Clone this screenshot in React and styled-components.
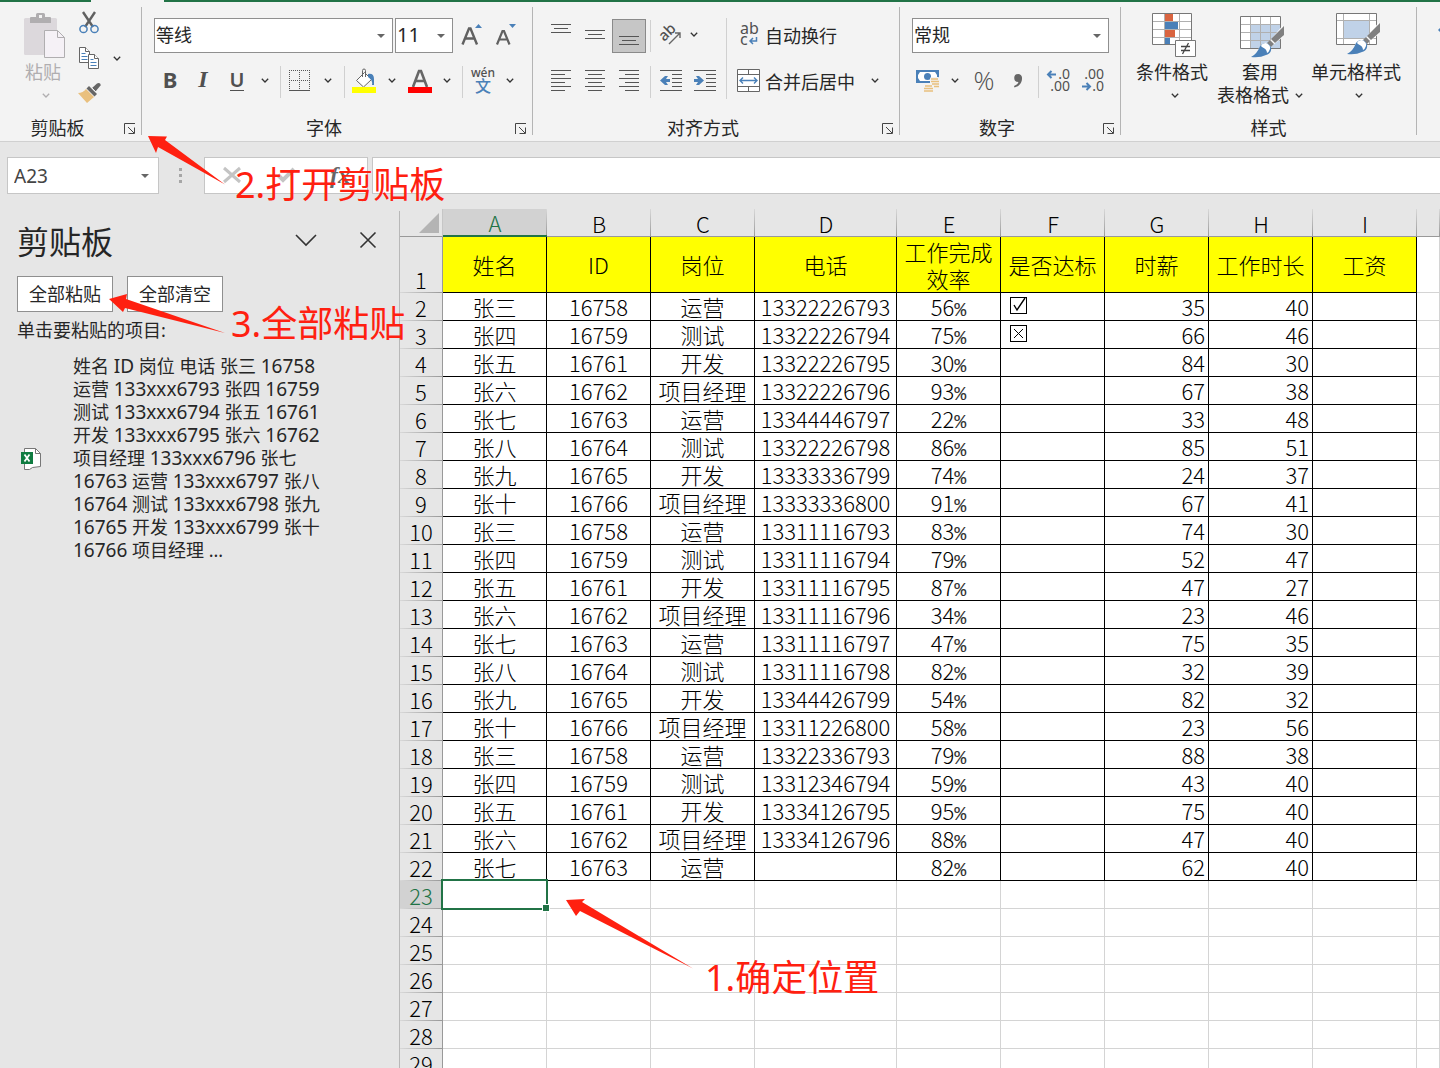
import React from 'react';
import styled, { createGlobalStyle, css } from 'styled-components';

const GlobalStyle = createGlobalStyle`
    *, *::before, *::after {
        box-sizing: border-box;
    }

    body {
        margin: 0;
        background: #e6e6e6;
        color: #262626;
        font-family: 'Noto Sans', 'Noto Sans CJK SC', sans-serif;
        font-size: 18px;
    }

    button, select, input {
        font: inherit;
        color: inherit;
        margin: 0;
    }

    svg {
        display: block;
        flex: none;
        overflow: visible;
    }
`;

const PAGE = styled.div`
    position: relative;
    display: flex;
    flex-direction: column;
    height: 100vh;
    overflow: hidden;
`;

/* ---------- ribbon ---------- */

const TABSTRIP = styled.div`
    display: flex;
    justify-content: space-between;
    height: 2px;
    background: #217346;
`;

const ACTIVETAB = styled.div`
    width: 73px;
    margin-left: 91px;
    background: #f3f3f3;
`;

const RIBBON = styled.header`
    display: flex;
    flex: none;
    min-height: 140px;
    background: #f3f3f3;
    border-bottom: 1px solid #d0d0d0;
    overflow: hidden;
`;

const DIVIDER = styled.div`
    flex: none;
    width: 1px;
    margin: 5px 0 6px;
    background: #b4b4b4;
`;

const GROUP = styled.section`
    display: flex;
    flex-direction: column;
    flex: none;
    width: ${props => props.$width}px;
    padding-top: ${props => props.$top || 16}px;
    padding-bottom: 1px;
`;

const GROUPBODY = styled.div`
    display: flex;
    padding-left: ${props => props.$left || 12}px;
`;

const GROUPFOOTER = styled.div`
    display: flex;
    align-items: center;
    height: 24px;
    margin-top: auto;
    line-height: 24px;
`;

const GROUPNAME = styled.span`
    flex: 1;
    text-align: center;
`;

const LAUNCHER = styled.button`
    display: flex;
    width: 26px;
    padding: 2px 0 0 9px;
    border: none;
    background: none;
`;

const TOOLROWS = styled.div`
    display: flex;
    flex-direction: column;
    gap: 11px;
`;

const TOOLROW = styled.div`
    display: flex;
    align-items: center;
    height: 35px;
`;

const TOOL = styled.button`
    display: flex;
    align-items: center;
    justify-content: center;
    flex: none;
    width: ${props => props.$width || 34}px;
    height: 34px;
    padding: 0 0 2px;
    border: 1px solid transparent;
    background: none;
    color: #505050;
    white-space: nowrap;

    ${props => props.$active && css`
        background: #c6c6c6;
        border-color: #8a8a8a;
    `}
`;

const TEXTTOOL = styled(TOOL)`
    justify-content: flex-start;
    gap: 5px;
    width: auto;
    padding-left: 6px;
    color: #262626;
`;

const LETTER = styled.span`
    padding-bottom: 4px;
    font-size: ${props => props.$size || 22}px;
    font-weight: ${props => props.$weight || 700};
    line-height: 26px;
`;

const ITALIC = styled(LETTER)`
    font-family: 'Liberation Serif', serif;
    font-style: italic;
`;

const UNDERLINED = styled(LETTER)`
    padding: 0;
    line-height: 20px;
    border-bottom: 1px solid #505050;
`;

const PERCENTSIGN = styled(LETTER)`
    padding-bottom: 2px;
    font-family: 'Open Sans', sans-serif;
`;

const SEPARATOR = styled.span`
    flex: none;
    align-self: ${props => (props.$tall ? 'stretch' : 'center')};
    width: 1px;
    height: ${props => (props.$tall ? 'auto' : '32px')};
    margin: 0 3px 0 4px;
    background: #d0d0d0;
`;

const COMBO = styled.label`
    display: flex;
    align-items: center;
    width: ${props => props.$width}px;
    height: 35px;
    margin-right: 2px;
    padding-right: 7px;
    border: 1px solid #8f8f8f;
    background: #fff;
    font-size: ${props => props.$size || 18}px;
`;

const COMBOSELECT = styled.select`
    flex: 1;
    min-width: 0;
    height: 100%;
    padding: 0 0 2px 1px;
    border: none;
    background: none;
    appearance: none;
    outline: none;
`;

const SMALLTOOLS = styled.div`
    display: flex;
    flex-direction: column;
    gap: 1px;
`;

const SMALLROW = styled.div`
    display: flex;
`;

const BIGTOOL = styled.button`
    display: flex;
    flex-direction: column;
    align-items: center;
    flex: none;
    width: ${props => props.$width}px;
    padding: 0;
    border: none;
    background: none;
    line-height: 23px;
    white-space: nowrap;
    color: ${props => (props.disabled ? '#b0aeb0' : '#262626')};
`;

const PASTETOOL = styled(BIGTOOL)`
    margin-top: 6px;
    margin-right: 4px;
`;

const BIGICON = styled.span`
    display: flex;
    height: 48px;
    padding-left: 4px;
`;

const BIGLINE = styled.span`
    display: flex;
    align-items: center;
    gap: 6px;
    height: 23px;
`;

const DROPLINE = styled(BIGLINE)`
    padding-left: 5px;
`;

const RIBBONEND = styled.div`
    display: flex;
    flex: 1;
    justify-content: flex-end;
    padding-top: 24px;
`;

/* ---------- formula bar ---------- */

const FORMULABAR = styled.div`
    display: flex;
    align-items: center;
    flex: none;
    height: 67px;
    padding: 0 0 0 7px;
`;

const NAMEBOX = styled.div`
    display: flex;
    align-items: center;
    width: 152px;
    height: 37px;
    padding-right: 9px;
    border: 1px solid #c6c6c6;
    background: #fff;
`;

const NAMEINPUT = styled.input`
    flex: 1;
    min-width: 0;
    padding: 1px 0 0 6px;
    border: none;
    outline: none;
    background: none;
    color: #444;
    font-size: 19px;
`;

const GRIP = styled.div`
    display: flex;
    flex-direction: column;
    gap: 3px;
    margin: 0 22px 0 20px;
`;

const GRIPDOT = styled.i`
    width: 3px;
    height: 3px;
    background: #a6a6a6;
`;

const FORMULATOOLS = styled.div`
    display: flex;
    align-items: center;
    width: 164px;
    height: 37px;
    margin-right: 4px;
    border: 1px solid #c6c6c6;
    background: #fff;
`;

const FX = styled.span`
    font-family: 'Liberation Serif', serif;
    font-style: italic;
    font-size: 24px;
    font-weight: 700;
    line-height: 26px;
    color: #666;
`;

const FORMULAINPUT = styled.input`
    flex: 1;
    min-width: 0;
    height: 37px;
    padding: 0 8px;
    border: 1px solid #c6c6c6;
    border-right: none;
    outline: none;
    background: #fff;
`;

/* ---------- clipboard pane ---------- */

const WORKSPACE = styled.main`
    display: flex;
    flex: 1;
    min-height: 0;
`;

const PANE = styled.aside`
    flex: none;
    width: 400px;
    margin-top: 2px;
    padding: 10px 0 0 17px;
    border-right: 1px solid #b8b8b8;
`;

const PANEHEAD = styled.div`
    display: flex;
    align-items: center;
    height: 42px;
`;

const PANETITLE = styled.h2`
    flex: 1;
    margin: 0;
    font-size: 32px;
    font-weight: 400;
    line-height: 42px;
`;

const PANEICON = styled.button`
    display: flex;
    justify-content: center;
    width: 62px;
    height: 22px;
    padding: 0;
    border: none;
    background: none;
`;

const PANEBUTTONS = styled.div`
    display: flex;
    gap: 14px;
    margin-top: 13px;
`;

const PANEBUTTON = styled.button`
    width: 96px;
    height: 36px;
    padding: 0 0 2px;
    border: 1px solid #8f8f8f;
    background: #fff;
    white-space: nowrap;
`;

const HINT = styled.p`
    margin: 6px 0 0;
    line-height: 24px;
`;

const CLIP = styled.div`
    display: flex;
    align-items: center;
    gap: 32px;
    margin-top: 13px;
    padding-left: 4px;
`;

const CLIPTEXT = styled.p`
    margin: 0;
    line-height: 23px;
    white-space: pre-line;
`;

const LATIN = styled.span`
    font-size: 19px;
    line-height: 1;
`;

/* ---------- sheet ---------- */

const SHEETAREA = styled.div`
    flex: 1;
    min-width: 0;
    overflow: hidden;
`;

const SHEET = styled.table`
    width: 100%;
    table-layout: fixed;
    border-collapse: separate;
    border-spacing: 0;
    background: #fff;
    color: #000;
    font-family: 'Noto Sans CJK SC', sans-serif;
    font-size: 22px;
    font-weight: 300;
    line-height: 27px;
`;

const COL = styled.col`
    width: ${props => (props.$width ? `${props.$width}px` : 'auto')};
`;

const CORNER = styled.td`
    height: 28px;
    padding: 3px 3px 3px 19px;
    border-right: 1px solid #c6c6c6;
    border-bottom: 1px solid #999;
    background: #e6e6e6;
`;

const COLHEAD = styled.th`
    height: 28px;
    padding: 0;
    border-bottom: 1px solid #999;
    background: linear-gradient(#d8d8d8, #999) right / 1px 100% no-repeat #e6e6e6;
    font-weight: 300;
    line-height: 26px;

    ${props => props.$active && css`
        border-bottom: 2px solid #217346;
        background-color: #d2d2d2;
        color: #217346;
    `}
`;

const ROWHEAD = styled.th`
    height: 28px;
    padding: 0;
    border-right: 1px solid #999;
    background: linear-gradient(90deg, #d8d8d8, #999) bottom / 100% 1px no-repeat #e6e6e6;
    font-weight: 300;
    vertical-align: bottom;

    ${props => props.$active && css`
        background-color: #d2d2d2;
        color: #217346;
    `}
`;

const CELL = styled.td`
    position: relative;
    height: 28px;
    padding: 0 3px;
    border-right: 1px solid ${props => (props.$boxed ? '#000' : '#d4d4d4')};
    border-bottom: 1px solid ${props => (props.$boxed ? '#000' : '#d4d4d4')};
    text-align: ${props => props.$align || 'center'};
    white-space: nowrap;
`;

const TITLECELL = styled(CELL)`
    height: 56px;
    padding: 0;
    background: #ff0;
    white-space: pre-line;
`;

const PERCENT = styled.span`
    font-family: 'Liberation Mono', monospace;
    font-size: 20px;
    line-height: 0;
    color: #333;
`;

const TICK = styled.input`
    display: block;
    width: 17px;
    height: 17px;
    margin: 0 0 2px 6px;
    appearance: none;
    border: 1px solid #000;
    background: url("data:image/svg+xml,%3Csvg xmlns='http://www.w3.org/2000/svg' viewBox='0 0 15 15'%3E%3Cpath d='M3 3l9 9M12 3l-9 9' fill='none' stroke='black'/%3E%3C/svg%3E");

    &:checked {
        background-image: url("data:image/svg+xml,%3Csvg xmlns='http://www.w3.org/2000/svg' viewBox='0 0 15 15'%3E%3Cpath d='M3 7l3 5L14 0' fill='none' stroke='black' stroke-width='1.4'/%3E%3C/svg%3E");
    }
`;

const SELECTION = styled.div`
    position: absolute;
    z-index: 1;
    top: -2px;
    right: -2px;
    bottom: -2px;
    left: -2px;
    border: 2px solid #217346;
`;

const FILLHANDLE = styled.i`
    position: absolute;
    right: -4px;
    bottom: -4px;
    width: 8px;
    height: 8px;
    border: 1px solid #fff;
    background: #217346;
`;

/* ---------- notes drawn over the window ---------- */

const NOTE = styled.div`
    position: absolute;
    z-index: 2;
    top: ${props => props.$top}px;
    left: ${props => props.$left}px;
    color: #ff2010;
    font-size: 36px;
    line-height: 44px;
    white-space: nowrap;
    pointer-events: none;
`;

const ARROWS = styled.svg`
    position: absolute;
    z-index: 2;
    top: 0;
    left: 0;
    fill: #ff2010;
    pointer-events: none;
`;

/* ---------- icons ---------- */

const Chevron = ({ color = '#333' }) => (
    <svg width="8" height="5" viewBox="0 0 8 5" fill="none" stroke={color} strokeWidth="1.3">
        <path d="M.8.8L4 4 7.2.8" />
    </svg>
);

const Caret = () => (
    <svg width="8" height="4" viewBox="0 0 8 4" fill="#666"><path d="M0 0h8L4 4z" /></svg>
);

const LauncherIcon = () => (
    <svg width="12" height="12" viewBox="0 0 12 12" fill="none" stroke="#444">
        <path d="M.5 11V.5H11M4 4l6 6M10.5 4.500V10.500H4.500" />
    </svg>
);

const PasteIcon = () => (
    <svg width="42" height="46" viewBox="0 0 42 46">
        <rect y="5" width="33" height="37" rx="1.500" fill="#dcd8dc" />
        <path d="M6 10V5q0-1 1-1h5V1.500Q12 0 13.500 0h6Q21 0 21 1.500V4h5q1 0 1 1v5z" fill="#b0aeb0" />
        <rect x="15" y="2" width="3" height="3" fill="#f3f3f3" />
        <path d="M20.500 17.500h13l7 7v20h-20z" fill="#f5f1f6" stroke="#b0aeb0" />
        <path d="M33.500 17.500v7h7" fill="none" stroke="#b0aeb0" />
    </svg>
);

const CutIcon = () => (
    <svg width="20" height="22" viewBox="0 0 20 22" fill="none">
        <path d="M4 0L14 15M16 0L6 15" stroke="#606060" strokeWidth="2.400" />
        <circle cx="4.500" cy="17" r="3.600" stroke="#4a80b8" strokeWidth="1.500" />
        <circle cx="15.500" cy="17" r="3.600" stroke="#4a80b8" strokeWidth="1.500" />
    </svg>
);

const CopyIcon = () => (
    <svg width="21" height="23" viewBox="0 0 21 23" fill="#fff" stroke="#666">
        <path d="M.5.5h6l4 4v11H.5z" />
        <path d="M6.500.5v4h4" />
        <path d="M2.500 6.500h4M2.500 9.500h6M2.500 12.500h6" stroke="#4a80b8" />
        <path d="M9.500 7.500h6l4 4v10h-10z" />
        <path d="M15.500 7.500v4h4" />
        <path d="M11.500 12.500h3M11.500 15.500h6M11.500 18.500h6" stroke="#4a80b8" />
    </svg>
);

const PainterIcon = () => (
    <svg width="23" height="20" viewBox="0 0 23 20">
        <path d="M0 10q5 0 8-4l8 8-7 6z" fill="#e9c07e" />
        <path d="M8.500 5.500l2.500-2.500 8 8-2.500 2.500z" fill="#666" />
        <path d="M14 5l5-4.500 1.500-.5q2.500 0 2 2.500L17.500 8.500z" fill="#666" />
        <path d="M12.500 3.500l6 6" stroke="#f3f3f3" />
    </svg>
);

const BordersIcon = () => (
    <svg width="22" height="22" viewBox="0 0 22 22" stroke="#555" fill="none">
        <path d="M0 .5h22M0 10.500h22M.5 0v20M10.500 0v20M20.500 0v20" strokeDasharray="1 1" />
        <path d="M0 20.500h21" />
    </svg>
);

const FillIcon = () => (
    <svg width="24" height="26" viewBox="0 0 24 26">
        <path d="M4.500 12.500l8-8 7 7-8 7.500z" fill="#fff" stroke="#666" />
        <path d="M10.500 9V2.500Q10.500 1 12 1t1.500 1.500V9" fill="none" stroke="#666" />
        <path d="M16 6q6-1 6 5v6h-2q1-5-4-8z" fill="#4a80b8" />
        <rect y="19" width="24" height="6" fill="#ff0" />
    </svg>
);

const FontColorIcon = () => (
    <svg width="24" height="26" viewBox="0 0 24 26">
        <path d="M5 19L11 3h2l6 16M7.500 13h9" fill="none" stroke="#666" strokeWidth="2.600" />
        <rect y="19" width="24" height="6" fill="#f00" />
    </svg>
);

const SizeIcon = ({ down }) => (
    <svg width="22" height="24" viewBox="0 0 22 24">
        {down
            ? <path d="M2 21.500L7.500 8h1.500l5.500 13.500M4.500 16.500h7.500" fill="none" stroke="#606060" strokeWidth="2.200" />
            : <path d="M1.500 21.500L8 5.500h1.500l6.500 16M4 15.500h9.500" fill="none" stroke="#606060" strokeWidth="2.400" />}
        {down ? <path d="M14 1h7l-3.500 4z" fill="#4a80b8" /> : <path d="M14 5h7l-3.500-4z" fill="#4a80b8" />}
    </svg>
);

const PINYIN = styled.span`
    display: flex;
    flex-direction: column;
    align-items: center;
    font-size: 12px;
    font-weight: 500;
    line-height: 11px;
`;

const HANZI = styled.span`
    color: #4a80b8;
    font-size: 16px;
    line-height: 16px;
`;

// each line is [start, end] on a 20px wide icon
const LINES = {
    top: [[0, 20], [3, 17], [0, 20]],
    left: [[0, 20], [0, 14], [0, 20], [0, 14], [0, 20], [0, 14]],
    center: [[0, 20], [3, 17], [0, 20], [3, 17], [0, 20], [3, 17]],
    right: [[0, 20], [6, 20], [0, 20], [6, 20], [0, 20], [6, 20]],
};

const LinesIcon = ({ kind, shift = 0 }) => (
    <svg width="20" height="24" viewBox="0 0 20 24" stroke="#555">
        {LINES[kind].map(([from, to], i) => (
            <path key={i} d={`M${from} ${i * 4 + 1.5 + shift}H${to}`} />
        ))}
    </svg>
);

const IndentIcon = ({ more }) => (
    <svg width="22" height="22" viewBox="0 0 22 22">
        <path d="M0 .5h22M12 4.500h10M12 8.500h10M12 12.500h10M12 16.500h10M0 20.500h22" stroke="#555" />
        <path
            d={more ? 'M0 9h4L2 6h3l5 4.500L5 15H2l2-3H0z' : 'M10 9H6l2-3H5L0 10.500 5 15h3l-2-3h4z'}
            fill="#4a80b8"
        />
    </svg>
);

const OrientationIcon = () => (
    <svg width="24" height="24" viewBox="0 0 24 24">
        <text x="1" y="15" transform="rotate(-45 8 12)" fontSize="15" fontWeight="500" fontFamily="Noto Sans" fill="#505050">ab</text>
        <path d="M10 21L21 10M16 10h5v5" fill="none" stroke="#666" strokeWidth="1.400" />
    </svg>
);

const WrapIcon = () => (
    <svg width="23" height="26" viewBox="0 0 23 26">
        <text x="3" y="12" fontSize="16" fontFamily="Noto Sans" fill="#505050">ab</text>
        <text x="3" y="23" fontSize="16" fontFamily="Noto Sans" fill="#505050">c</text>
        <path d="M19.500 15v4h-6M16 16l-3 3 3 3" fill="none" stroke="#4a80b8" strokeWidth="1.500" />
    </svg>
);

const MergeIcon = () => (
    <svg width="23" height="23" viewBox="0 0 23 23" fill="none">
        <path d="M.5.5h22v22H.5z" fill="#fff" stroke="#666" />
        <path d="M0 5.500h23M0 17.500h23M11.500 0v5M11.500 18v5" stroke="#666" />
        <path d="M3 11.500h17M6 8.500l-3 3 3 3M17 8.500l3 3-3 3" stroke="#4a80b8" strokeWidth="1.400" />
    </svg>
);

const MoneyIcon = () => (
    <svg width="24" height="24" viewBox="0 0 24 24">
        <rect y="1" width="23" height="13" fill="#4a80b8" />
        <path d="M4 3h15l2 3v3l-2 3H4L2 9V6z" fill="#fff" />
        <circle cx="11.500" cy="7.500" r="3.500" fill="#4a80b8" />
        <rect x="14" y="8" width="10" height="11" rx="2" fill="#f3f3f3" />
        <rect x="7" y="15" width="11" height="9" rx="2" fill="#f3f3f3" />
        <path d="M15 10h7M15 12.500h8M16 15h7M18 17.500h5M9 17h7M8 19.500h9M8 22h9" stroke="#e9c07e" strokeWidth="1.700" />
    </svg>
);

const CommaIcon = () => (
    <svg width="10" height="14" viewBox="0 0 10 14" fill="#666">
        <path d="M5 0a4 4 0 0 1 4 4.500C9 9 6 12.500 1.500 13.500L1 12Q4.500 11 5.500 8A4 4 0 1 1 5 0z" />
    </svg>
);

const DecimalIcon = ({ fewer }) => (
    <svg width="24" height="26" viewBox="0 0 24 26" fontFamily="Noto Sans" fontSize="14" fill="#505050">
        <text x="23" y="11" textAnchor="end">{fewer ? '.00' : '.0'}</text>
        <text x="23" y="23" textAnchor="end">{fewer ? '.0' : '.00'}</text>
        <path
            d={fewer ? 'M1 18.500h8M5.500 15l3.500 3.500-3.500 3.500' : 'M9 6.500H1M4.500 3l-3.500 3.500 3.500 3.500'}
            fill="none"
            stroke="#4a80b8"
            strokeWidth="2"
        />
    </svg>
);

const ConditionalIcon = () => (
    <svg width="44" height="45" viewBox="0 0 44 45" fill="none">
        <path d="M.5.5h39v31H.5z" fill="#fff" stroke="#777" />
        <path d="M1 8.500h38M1 16.500h38M1 24.500h38M12.500 1v30M27.500 1v30" stroke="#b0b0b0" />
        <rect x="13" y="1" width="8" height="7" fill="#d96440" />
        <rect x="13" y="9" width="13" height="7" fill="#4a80b8" />
        <rect x="13" y="17" width="10" height="7" fill="#d96440" />
        <rect x="13" y="25" width="5" height="6" fill="#4a80b8" />
        <path d="M23.500 27.500h20v16h-20z" fill="#fff" stroke="#777" />
        <path d="M29 33.500h9M29 37.500h9M36.500 30l-6 11" stroke="#444" strokeWidth="1.300" />
    </svg>
);

const Brush = ({ x, y }) => (
    <g transform={`translate(${x} ${y})`}>
        <path d="M32 0v12L22 20l-6 6Q13 32 0 32q7-6 8-9 2-6 9-5z" fill="#fff" opacity=".9" />
        <path d="M33 1v9l-9 8-4-4z" fill="#808080" />
        <path d="M19 15l4 4-3 3-4-4z" fill="#808080" />
        <path d="M9 21a6 6 0 1 1 6 9Q9 33 0 32q6-3 9-11z" fill="#4a80b8" />
        <path d="M10 21q1-3 5-3 5 2 4 6-1 3-3 4 0-4-5-6z" fill="#fff" />
    </g>
);

const TableStyleIcon = () => (
    <svg width="45" height="45" viewBox="0 0 45 45" fill="none">
        <path d="M.5 3.500h40v32H.5z" fill="#fff" stroke="#777" />
        <path d="M11 12h29v23H11z" fill="#c0d2e8" />
        <path d="M1 11.500h39M1 19.500h39M1 27.500h39M10.500 4v31M20.500 4v31M30.500 4v31" stroke="#b0b0b0" />
        <Brush x={11} y={12} />
    </svg>
);

const CellStyleIcon = () => (
    <svg width="45" height="45" viewBox="0 0 45 45" fill="none">
        <path d="M.5.5h40v31H.5z" fill="#fff" stroke="#777" />
        <path d="M8 8h25v17H8z" fill="#c0d2e8" />
        <path d="M1 7.500h39M1 25.500h39M7.500 1v30M33.500 1v30" stroke="#b0b0b0" />
        <Brush x={11} y={9} />
    </svg>
);

const ExcelIcon = () => (
    <svg width="20" height="23" viewBox="0 0 20 23">
        <path d="M3.500 1.500h11l5 5v13l-8 1-3 2h-5z" fill="#fff" stroke="#777" />
        <path d="M14.500 1.500v5h5" fill="none" stroke="#777" />
        <rect y="5" width="12" height="12" fill="#107c41" />
        <path d="M3.500 7.500l5 7M8.500 7.500l-5 7" stroke="#fff" strokeWidth="1.800" />
    </svg>
);

/* ---------- data ---------- */

const COLUMNS = [
    { name: 'A', width: 104, title: '姓名' },
    { name: 'B', width: 104, title: 'ID' },
    { name: 'C', width: 104, title: '岗位' },
    { name: 'D', width: 142, title: '电话' },
    { name: 'E', width: 104, title: '工作完成\n效率' },
    { name: 'F', width: 104, title: '是否达标', align: 'left' },
    { name: 'G', width: 104, title: '时薪', align: 'right' },
    { name: 'H', width: 104, title: '工作时长', align: 'right' },
    { name: 'I', width: 104, title: '工资' },
];

const ROWS = [
    ['张三', 16758, '运营', '13322226793', 56, true, 35, 40],
    ['张四', 16759, '测试', '13322226794', 75, false, 66, 46],
    ['张五', 16761, '开发', '13322226795', 30, null, 84, 30],
    ['张六', 16762, '项目经理', '13322226796', 93, null, 67, 38],
    ['张七', 16763, '运营', '13344446797', 22, null, 33, 48],
    ['张八', 16764, '测试', '13322226798', 86, null, 85, 51],
    ['张九', 16765, '开发', '13333336799', 74, null, 24, 37],
    ['张十', 16766, '项目经理', '13333336800', 91, null, 67, 41],
    ['张三', 16758, '运营', '13311116793', 83, null, 74, 30],
    ['张四', 16759, '测试', '13311116794', 79, null, 52, 47],
    ['张五', 16761, '开发', '13311116795', 87, null, 47, 27],
    ['张六', 16762, '项目经理', '13311116796', 34, null, 23, 46],
    ['张七', 16763, '运营', '13311116797', 47, null, 75, 35],
    ['张八', 16764, '测试', '13311116798', 82, null, 32, 39],
    ['张九', 16765, '开发', '13344426799', 54, null, 82, 32],
    ['张十', 16766, '项目经理', '13311226800', 58, null, 23, 56],
    ['张三', 16758, '运营', '13322336793', 79, null, 88, 38],
    ['张四', 16759, '测试', '13312346794', 59, null, 43, 40],
    ['张五', 16761, '开发', '13334126795', 95, null, 75, 40],
    ['张六', 16762, '项目经理', '13334126796', 88, null, 47, 40],
    ['张七', 16763, '运营', '', 82, null, 62, 40],
];

const EMPTYROWS = [23, 24, 25, 26, 27, 28, 29];

const CLIPBOARD = `姓名 ID 岗位 电话 张三 16758
运营 133xxx6793 张四 16759
测试 133xxx6794 张五 16761
开发 133xxx6795 张六 16762
项目经理 133xxx6796 张七
16763 运营 133xxx6797 张八
16764 测试 133xxx6798 张九
16765 开发 133xxx6799 张十
16766 项目经理 ...`;

/* ---------- parts ---------- */

const Drop = ({ width = 24, label }) => (
    <TOOL $width={width} aria-label={label}><Chevron /></TOOL>
);

const Combo = ({ width, size, label, value }) => (
    <COMBO $width={width} $size={size}>
        <COMBOSELECT aria-label={label} defaultValue={value}>
            <option>{value}</option>
        </COMBOSELECT>
        <Caret />
    </COMBO>
);

const Footer = ({ name, launcher = true }) => (
    <GROUPFOOTER>
        <GROUPNAME>{name}</GROUPNAME>
        {launcher && <LAUNCHER aria-label={`${name}设置`}><LauncherIcon /></LAUNCHER>}
    </GROUPFOOTER>
);

const ClipboardGroup = () => (
    <GROUP $width={141} $top={5}>
        <GROUPBODY $left={18}>
            <PASTETOOL $width={50} disabled>
                <BIGICON><PasteIcon /></BIGICON>
                <BIGLINE>粘贴</BIGLINE>
                <DROPLINE><Chevron color="#b0aeb0" /></DROPLINE>
            </PASTETOOL>
            <SMALLTOOLS>
                <TOOL aria-label="剪切"><CutIcon /></TOOL>
                <SMALLROW>
                    <TOOL aria-label="复制"><CopyIcon /></TOOL>
                    <Drop width={22} label="复制选项" />
                </SMALLROW>
                <TOOL aria-label="格式刷"><PainterIcon /></TOOL>
            </SMALLTOOLS>
        </GROUPBODY>
        <Footer name="剪贴板" />
    </GROUP>
);

const FontGroup = () => (
    <GROUP $width={390}>
        <GROUPBODY>
            <TOOLROWS>
                <TOOLROW>
                    <Combo width={239} label="字体" value="等线" />
                    <Combo width={58} size={20} label="字号" value="11" />
                    <TOOL aria-label="增大字号"><SizeIcon /></TOOL>
                    <TOOL aria-label="减小字号"><SizeIcon down /></TOOL>
                </TOOLROW>
                <TOOLROW>
                    <TOOL $width={32} aria-label="加粗"><LETTER>B</LETTER></TOOL>
                    <TOOL aria-label="倾斜"><ITALIC $size={24}>I</ITALIC></TOOL>
                    <TOOL aria-label="下划线"><UNDERLINED $size={20} $weight={600}>U</UNDERLINED></TOOL>
                    <Drop width={22} label="下划线选项" />
                    <SEPARATOR />
                    <TOOL $width={32} aria-label="边框"><BordersIcon /></TOOL>
                    <Drop label="边框选项" />
                    <SEPARATOR />
                    <TOOL $width={32} aria-label="填充颜色"><FillIcon /></TOOL>
                    <Drop label="填充颜色选项" />
                    <TOOL $width={32} aria-label="字体颜色"><FontColorIcon /></TOOL>
                    <Drop width={22} label="字体颜色选项" />
                    <SEPARATOR />
                    <TOOL aria-label="拼音"><PINYIN>wén<HANZI>文</HANZI></PINYIN></TOOL>
                    <Drop width={20} label="拼音选项" />
                </TOOLROW>
            </TOOLROWS>
        </GROUPBODY>
        <Footer name="字体" />
    </GROUP>
);

const AlignGroup = () => (
    <GROUP $width={366}>
        <GROUPBODY $left={11}>
            <TOOLROWS>
                <TOOLROW>
                    <TOOL aria-label="顶端对齐"><LinesIcon kind="top" /></TOOL>
                    <TOOL aria-label="垂直居中"><LinesIcon kind="top" shift={6} /></TOOL>
                    <TOOL $active aria-label="底端对齐"><LinesIcon kind="top" shift={12} /></TOOL>
                    <SEPARATOR />
                    <TOOL aria-label="方向"><OrientationIcon /></TOOL>
                    <Drop width={12} label="方向选项" />
                </TOOLROW>
                <TOOLROW>
                    <TOOL aria-label="左对齐"><LinesIcon kind="left" /></TOOL>
                    <TOOL aria-label="居中"><LinesIcon kind="center" /></TOOL>
                    <TOOL aria-label="右对齐"><LinesIcon kind="right" /></TOOL>
                    <SEPARATOR />
                    <TOOL aria-label="减少缩进量"><IndentIcon /></TOOL>
                    <TOOL aria-label="增加缩进量"><IndentIcon more /></TOOL>
                </TOOLROW>
            </TOOLROWS>
            <SEPARATOR $tall />
            <TOOLROWS>
                <TOOLROW>
                    <TEXTTOOL><WrapIcon />自动换行</TEXTTOOL>
                </TOOLROW>
                <TOOLROW>
                    <TEXTTOOL><MergeIcon />合并后居中</TEXTTOOL>
                    <Drop width={38} label="合并选项" />
                </TOOLROW>
            </TOOLROWS>
        </GROUPBODY>
        <Footer name="对齐方式" />
    </GROUP>
);

const NumberGroup = () => (
    <GROUP $width={220}>
        <GROUPBODY>
            <TOOLROWS>
                <TOOLROW>
                    <Combo width={197} label="数字格式" value="常规" />
                </TOOLROW>
                <TOOLROW>
                    <TOOL $width={32} aria-label="会计数字格式"><MoneyIcon /></TOOL>
                    <Drop width={22} label="会计格式选项" />
                    <TOOL $width={36} aria-label="百分比样式"><PERCENTSIGN $size={26} $weight={300}>%</PERCENTSIGN></TOOL>
                    <TOOL $width={32} aria-label="千位分隔样式"><CommaIcon /></TOOL>
                    <SEPARATOR />
                    <TOOL aria-label="增加小数位数"><DecimalIcon /></TOOL>
                    <TOOL aria-label="减少小数位数"><DecimalIcon fewer /></TOOL>
                </TOOLROW>
            </TOOLROWS>
        </GROUPBODY>
        <Footer name="数字" />
    </GROUP>
);

const StylesGroup = () => (
    <GROUP $width={295} $top={11}>
        <GROUPBODY $left={7}>
            <BIGTOOL $width={88}>
                <BIGICON><ConditionalIcon /></BIGICON>
                <BIGLINE>条件格式</BIGLINE>
                <DROPLINE><Chevron /></DROPLINE>
            </BIGTOOL>
            <BIGTOOL $width={88}>
                <BIGICON><TableStyleIcon /></BIGICON>
                <BIGLINE>套用</BIGLINE>
                <BIGLINE>表格格式<Chevron /></BIGLINE>
            </BIGTOOL>
            <BIGTOOL $width={104}>
                <BIGICON><CellStyleIcon /></BIGICON>
                <BIGLINE>单元格样式</BIGLINE>
                <DROPLINE><Chevron /></DROPLINE>
            </BIGTOOL>
        </GROUPBODY>
        <Footer name="样式" launcher={false} />
    </GROUP>
);

const Cell = ({ column, value, row }) => {
    let content = value;
    if (column.name === 'E') {
        content = <>{value}<PERCENT>%</PERCENT></>;
    }
    if (column.name === 'F') {
        content = typeof value === 'boolean'
            ? <TICK type="checkbox" defaultChecked={value} aria-label={`第${row}行是否达标`} />
            : null;
    }
    return <CELL $boxed $align={column.align}>{content}</CELL>;
};

const Sheet = () => (
    <SHEET>
        <colgroup>
            <COL $width={43} />
            {COLUMNS.map(column => <COL key={column.name} $width={column.width} />)}
            <COL />
        </colgroup>
        <thead>
            <tr>
                <CORNER>
                    <svg width="20" height="20" viewBox="0 0 20 20" fill="#b4b4b4"><path d="M20 0v20H0z" /></svg>
                </CORNER>
                {COLUMNS.map(column => (
                    <COLHEAD key={column.name} scope="col" $active={column.name === 'A'}>{column.name}</COLHEAD>
                ))}
                <COLHEAD scope="col" />
            </tr>
        </thead>
        <tbody>
            <tr>
                <ROWHEAD scope="row">1</ROWHEAD>
                {COLUMNS.map(column => <TITLECELL key={column.name} $boxed>{column.title}</TITLECELL>)}
                <CELL />
            </tr>
            {ROWS.map((values, i) => (
                <tr key={i}>
                    <ROWHEAD scope="row">{i + 2}</ROWHEAD>
                    {COLUMNS.map((column, c) => (
                        <Cell key={column.name} column={column} value={values[c]} row={i + 2} />
                    ))}
                    <CELL />
                </tr>
            ))}
            {EMPTYROWS.map(number => (
                <tr key={number}>
                    <ROWHEAD scope="row" $active={number === 23}>{number}</ROWHEAD>
                    {COLUMNS.map(column => (
                        <CELL key={column.name}>
                            {number === 23 && column.name === 'A' && <SELECTION><FILLHANDLE /></SELECTION>}
                        </CELL>
                    ))}
                    <CELL />
                </tr>
            ))}
        </tbody>
    </SHEET>
);

const ClipboardPane = () => (
    <PANE>
        <PANEHEAD>
            <PANETITLE>剪贴板</PANETITLE>
            <PANEICON aria-label="任务窗格选项">
                <svg width="20" height="20" viewBox="0 0 20 20" fill="none" stroke="#333" strokeWidth="1.600">
                    <path d="M0 4l10 10L20 4" />
                </svg>
            </PANEICON>
            <PANEICON aria-label="关闭">
                <svg width="16" height="20" viewBox="0 0 16 20" fill="none" stroke="#333" strokeWidth="1.600">
                    <path d="M.5 1.500l15 15M15.500 1.500l-15 15" />
                </svg>
            </PANEICON>
        </PANEHEAD>
        <PANEBUTTONS>
            <PANEBUTTON>全部粘贴</PANEBUTTON>
            <PANEBUTTON>全部清空</PANEBUTTON>
        </PANEBUTTONS>
        <HINT>单击要粘贴的项目:</HINT>
        <CLIP>
            <ExcelIcon />
            <CLIPTEXT>
                {CLIPBOARD.split(/(\w+)/).map((part, i) => (
                    /^\w/.test(part) ? <LATIN key={i}>{part}</LATIN> : part
                ))}
            </CLIPTEXT>
        </CLIP>
    </PANE>
);

const FormulaBar = () => (
    <FORMULABAR>
        <NAMEBOX>
            <NAMEINPUT aria-label="名称框" defaultValue="A23" />
            <Caret />
        </NAMEBOX>
        <GRIP><GRIPDOT /><GRIPDOT /><GRIPDOT /></GRIP>
        <FORMULATOOLS>
            <TOOL $width={54} aria-label="取消">
                <svg width="18" height="16" viewBox="0 0 18 16" stroke="#c4c4c4" strokeWidth="3">
                    <path d="M1 1l16 14M17 1L1 15" />
                </svg>
            </TOOL>
            <TOOL $width={54} aria-label="输入">
                <svg width="20" height="16" viewBox="0 0 20 16" fill="none" stroke="#c4c4c4" strokeWidth="4">
                    <path d="M2 8l5 5L18 2" />
                </svg>
            </TOOL>
            <TOOL $width={54} aria-label="插入函数"><FX>fx</FX></TOOL>
        </FORMULATOOLS>
        <FORMULAINPUT aria-label="编辑栏" />
    </FORMULABAR>
);

const App = () => {
    return (
        <PAGE>
            <GlobalStyle />
            <TABSTRIP><ACTIVETAB /></TABSTRIP>
            <RIBBON>
                <ClipboardGroup />
                <DIVIDER />
                <FontGroup />
                <DIVIDER />
                <AlignGroup />
                <DIVIDER />
                <NumberGroup />
                <DIVIDER />
                <StylesGroup />
                <DIVIDER />
                <RIBBONEND>
                    <svg width="2" height="8" viewBox="0 0 2 8" fill="#4a80b8"><path d="M0 4l2-2v4z" /></svg>
                </RIBBONEND>
            </RIBBON>
            <FormulaBar />
            <WORKSPACE>
                <ClipboardPane />
                <SHEETAREA>
                    <Sheet />
                </SHEETAREA>
            </WORKSPACE>
            <ARROWS width="700" height="980" viewBox="0 0 700 980">
                <path d="M566 900l19-1-3 3 111 66.500L580 911l-4 5z" />
                <path d="M148 136l19 .5-2 3.500 60 44.500-67-37.500-2 6z" />
                <path d="M109 299l18-5-1 5 99 34-100-25-2 4z" />
            </ARROWS>
            <NOTE $top={956} $left={705}>1.确定位置</NOTE>
            <NOTE $top={163} $left={235}>2.打开剪贴板</NOTE>
            <NOTE $top={302} $left={231}>3.全部粘贴</NOTE>
        </PAGE>
    );
};

export default App;
